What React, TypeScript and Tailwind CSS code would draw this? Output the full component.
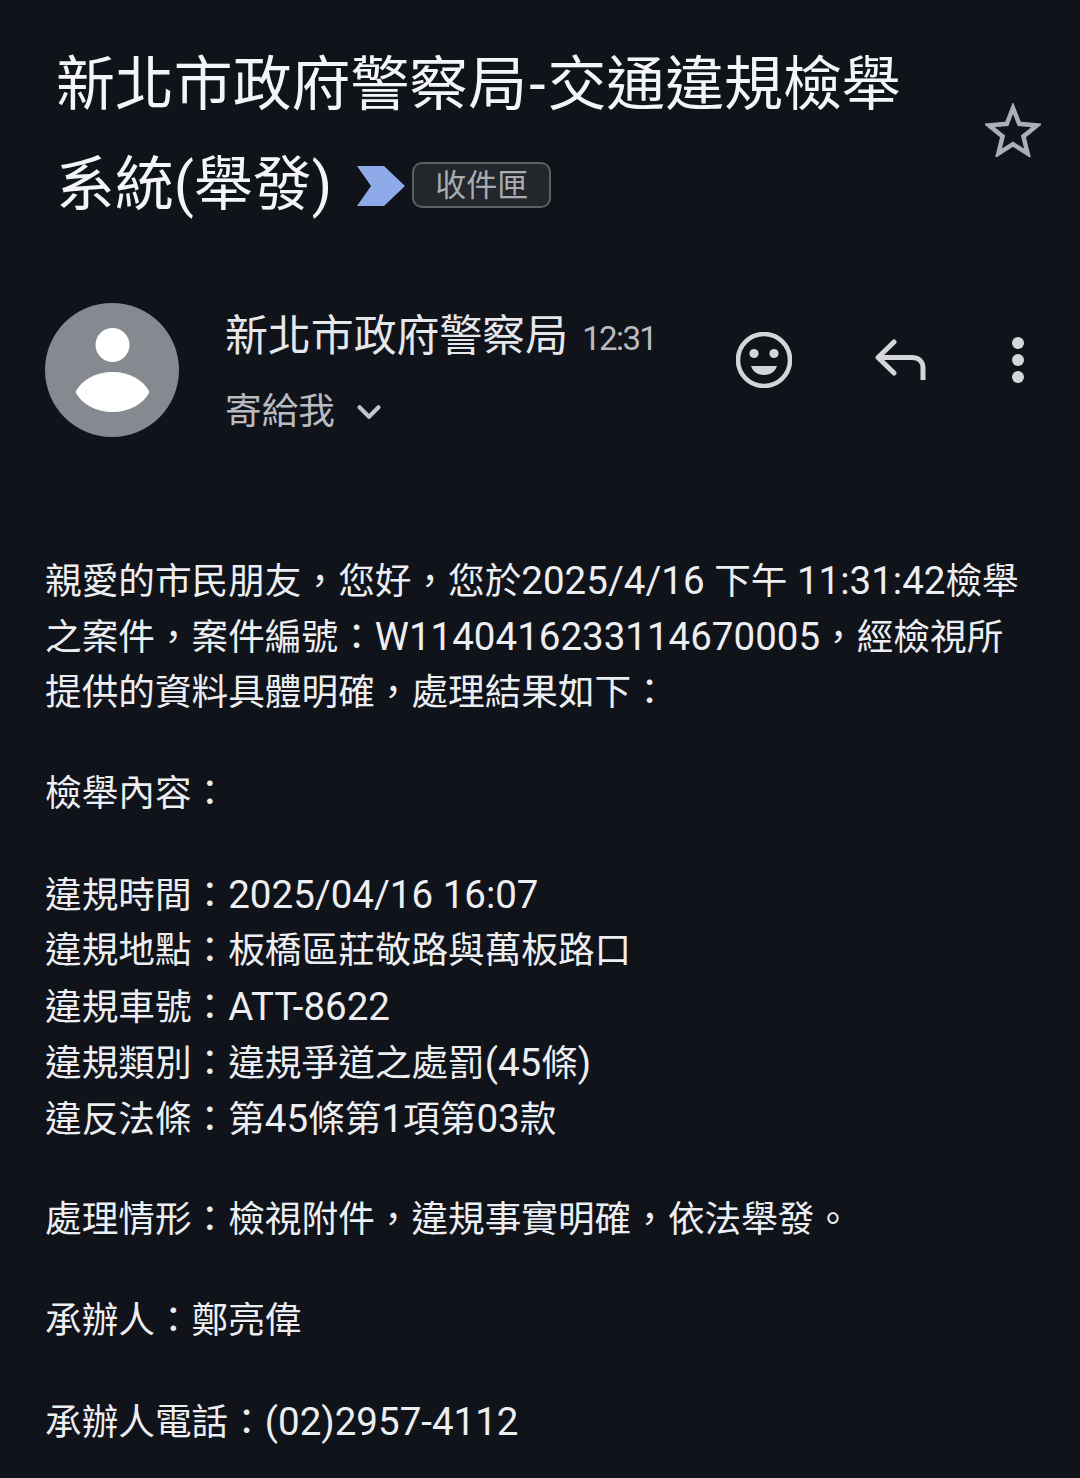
import { ChevronDown } from "lucide-react";

const FONT = "font-['Roboto','Noto_Sans_CJK_TC',sans-serif]";

function Avatar() {
  return (
    <svg viewBox="0 0 134 134" className="h-[134px] w-[134px] shrink-0">
      <circle cx="67" cy="67" r="67" fill="#858a91" />
      <circle cx="67.5" cy="42" r="17" fill="#ffffff" />
      <path d="M30.5 89C36.5 77 50.5 69 67.5 69C84.5 69 98.5 77 104.5 89C98.5 101 84.5 109 67.5 109C50.5 109 36.5 101 30.5 89Z" fill="#ffffff" />
    </svg>
  );
}

function Star() {
  return (
    <svg viewBox="0 0 56 54" className="mb-[10px] h-[54px] w-[56px]" fill="none" stroke="#adaeb6" strokeWidth="4.5">
      <path d="M28 5L34.2 20.8L52 22.4L38.4 33.4L42.6 50.5L28 41.2L13.4 50.5L17.6 33.4L4 22.4L21.8 20.8Z" />
    </svg>
  );
}

function Smile() {
  return (
    <svg viewBox="0 0 56 56" className="h-14 w-14">
      <circle cx="28" cy="28" r="26" fill="none" stroke="#d4d6dc" strokeWidth="4.5" />
      <circle cx="18" cy="21.5" r="4.6" fill="#d4d6dc" />
      <circle cx="38" cy="21.5" r="4.6" fill="#d4d6dc" />
      <path d="M15 34H41C39 40 34 43 28 43C22 43 17 40 15 34Z" fill="#d4d6dc" />
    </svg>
  );
}

function Reply() {
  return (
    <svg viewBox="0 0 52 42" className="h-[42px] w-[52px]" fill="none" stroke="#d4d6dc" strokeWidth="5">
      <path d="M20 3L4 18.5L20 34" strokeLinecap="round" strokeLinejoin="round" />
      <path d="M5 18.5H38C45 18.5 49 23 49 29V41" />
    </svg>
  );
}

function Dots() {
  return (
    <div className="flex flex-col gap-[5.5px]">
      <div className="h-[11.5px] w-[11.5px] rounded-full bg-[#d4d6dc]"></div>
      <div className="h-[11.5px] w-[11.5px] rounded-full bg-[#d4d6dc]"></div>
      <div className="h-[11.5px] w-[11.5px] rounded-full bg-[#d4d6dc]"></div>
    </div>
  );
}

// latin runs sit a bit larger than the CJK text
function Line({ text }: { text: string }) {
  const parts = text.split(/([\x20-\x7e]+)/);
  return (
    <p className="h-14 whitespace-nowrap leading-14">
      {parts.map((part, i) =>
        i % 2 === 1 ? (
          <span key={i} className="text-[38.5px]">
            {part}
          </span>
        ) : (
          part
        ),
      )}
    </p>
  );
}

function Para({ lines }: { lines: string[] }) {
  return (
    <div>
      {lines.map((line) => (
        <Line key={line} text={line} />
      ))}
    </div>
  );
}

export default function App() {
  return (
    <div className={`h-[1478px] w-[1080px] overflow-hidden bg-[#10131a] text-[#eceef2] ${FONT}`}>
      {/* Subject */}
      <div className="flex items-center justify-between pl-[56px] pr-[39px] pt-[35px]">
        <div className="w-[880px] text-[58.9px] leading-[100px] text-[#f4f5f7]">
          <div className="whitespace-nowrap">
            新北市政府警察局<span className="px-[2px]">-</span>交通違規檢舉
          </div>
          <div className="flex items-center whitespace-nowrap">
            <span>系統(舉發)</span>
            <svg viewBox="0 0 48 40" className="ml-[25px] mt-[2px] h-10 w-12">
              <path d="M0 0H27L48 20L27 40H0L14 20Z" fill="#8faae8" />
            </svg>
            <span className="ml-[7px] flex h-[46px] w-[139px] items-center justify-center rounded-[10px] border-2 border-[#5c6066] bg-[#23272c] text-[31px] leading-none text-[#a9acb2]">
              收件匣
            </span>
          </div>
        </div>
        <Star />
      </div>

      {/* Sender */}
      <div className="mt-[68px] flex items-start pl-[45px] pr-[55px]">
        <Avatar />
        <div className="ml-[46px] w-[470px] pt-[5px]">
          <div className="flex items-center">
            <span className="text-[42.9px] leading-[56px] text-[#e6e7eb]">新北市政府警察局</span>
            <span className="ml-[14px] mt-[6px] text-[33px] leading-[44px] tracking-[-1.6px] text-[#b9bbc1]">12:31</span>
          </div>
          <div className="mt-[25px] flex items-center">
            <span className="text-[36.65px] leading-[46px] text-[#b9bbc1]">寄給我</span>
            <ChevronDown className="ml-[15px] h-[38px] w-[38px] text-[#c4c6cd]" strokeWidth={2.6} />
          </div>
        </div>
        <div className="ml-[41px] mt-[29px] flex items-center">
          <Smile />
          <div className="ml-[82px]"><Reply /></div>
          <div className="ml-[86px]"><Dots /></div>
        </div>
      </div>

      {/* Body */}
      <div className="mt-[116px] flex flex-col gap-[45px] pl-[45px] text-[36.65px]">
        <Para
          lines={[
            "親愛的市民朋友，您好，您於2025/4/16 下午 11:31:42檢舉",
            "之案件，案件編號：W1140416233114670005，經檢視所",
            "提供的資料具體明確，處理結果如下：",
          ]}
        />
        <Para lines={["檢舉內容："]} />
        <Para
          lines={[
            "違規時間：2025/04/16 16:07",
            "違規地點：板橋區莊敬路與萬板路口",
            "違規車號：ATT-8622",
            "違規類別：違規爭道之處罰(45條)",
            "違反法條：第45條第1項第03款",
          ]}
        />
        <Para lines={["處理情形：檢視附件，違規事實明確，依法舉發。"]} />
        <Para lines={["承辦人：鄭亮偉"]} />
        <Para lines={["承辦人電話：(02)2957-4112"]} />
      </div>
    </div>
  );
}
